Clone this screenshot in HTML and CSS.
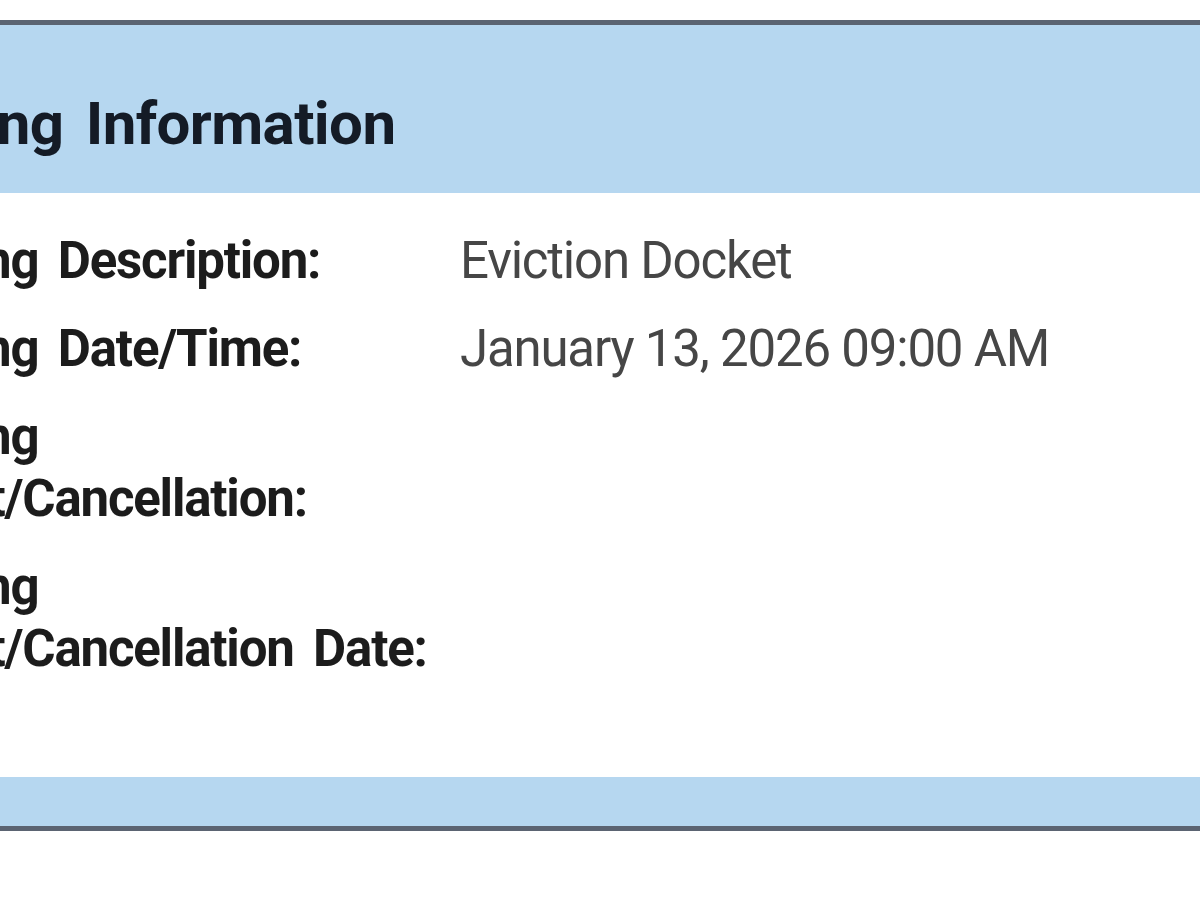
FILE: index.html
```html
<!DOCTYPE html>
<html lang="en">
<head>
<meta charset="utf-8">
<title>Hearing Information</title>
<link rel="stylesheet" href="styles.css">
</head>
<body>
<div class="page">
  <section class="panel">
    <header class="panel-header">
      <h2 class="panel-title">Hearing Information</h2>
    </header>
    <div class="panel-body">
      <div class="row">
        <div class="label">Hearing Description:</div>
        <div class="value">Eviction Docket</div>
      </div>
      <div class="row">
        <div class="label">Hearing Date/Time:</div>
        <div class="value">January 13, 2026 09:00 AM</div>
      </div>
      <div class="row">
        <div class="label">Hearing Result/Cancellation:</div>
        <div class="value"></div>
      </div>
      <div class="row">
        <div class="label">Hearing Result/Cancellation Date:</div>
        <div class="value"></div>
      </div>
    </div>
    <footer class="panel-footer"></footer>
  </section>
</div>
</body>
</html>
```

FILE: styles.css
```css
html, body {
  margin: 0;
  padding: 0;
  background: #ffffff;
  overflow: hidden;
}

body {
  width: 1200px;
  height: 900px;
  font-family: Roboto, "Liberation Sans", Arial, sans-serif;
}

.page {
  padding-top: 20px;
}

.panel {
  margin-left: -176px;
  width: 1420px;
  border-top: 5px solid #5b6472;
  border-bottom: 5px solid #5b6472;
}

.panel-header {
  box-sizing: border-box;
  background: #b6d7f0;
  height: 168px;
  padding: 63px 0 0 31px;
}

.panel-title {
  margin: 0;
  font-size: 60px;
  font-weight: 700;
  line-height: 72px;
  letter-spacing: -0.6px;
  word-spacing: 8px;
  color: #141b26;
}

.panel-body {
  background: #ffffff;
  padding: 37px 0 97px 42px;
  display: flex;
  flex-direction: column;
  gap: 26px;
}

.row {
  display: grid;
  grid-template-columns: 568px 1fr;
  column-gap: 26px;
  font-size: 51px;
  line-height: 62px;
  letter-spacing: -1.2px;
}

.label {
  font-weight: 700;
  color: #1c1c1c;
  word-spacing: 8px;
}

.value {
  font-weight: 400;
  color: #464646;
}

.panel-footer {
  background: #b6d7f0;
  height: 49px;
}
```
